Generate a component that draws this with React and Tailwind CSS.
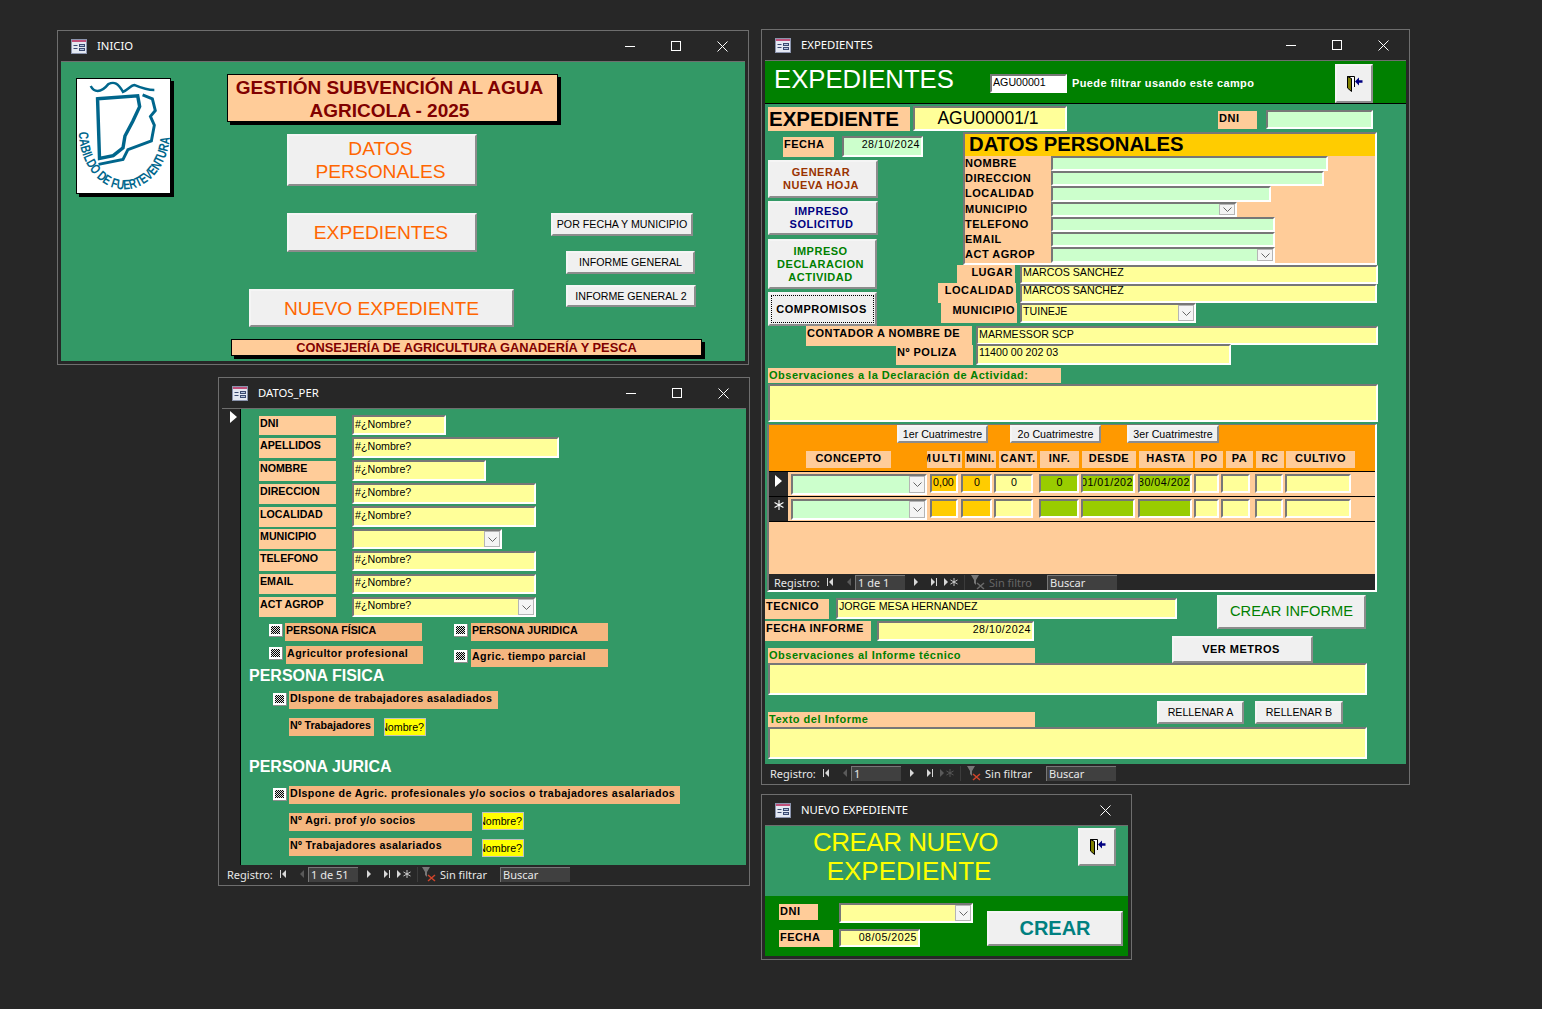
import React from "react";

const sunken = "border-2 border-t-[#777777] border-l-[#777777] border-r-white border-b-white";
const raised = "border-2 border-t-[#f5f5f5] border-l-[#f5f5f5] border-r-[#8c8c8c] border-b-[#8c8c8c] bg-[#f0f0f0]";
const wide = "font-bold text-[11px] tracking-[0.5px]";
const small = "font-bold text-[10.67px]";

const FormIcon = () => (
  <svg width="16" height="15" viewBox="0 0 16 15" className="shrink-0">
    <rect x="0.5" y="0.5" width="15" height="14" fill="#e4e8f2" stroke="#8b94ad" />
    <rect x="1" y="1" width="14" height="2" fill="#c0507a" />
    <path d="M2.5 6.5H6.5M2.5 9.5H6.5" stroke="#3b4a70" />
    <rect x="8.5" y="5.5" width="5" height="2" fill="#b4c3de" stroke="#3b4a70" />
    <rect x="8.5" y="9.5" width="5" height="2" fill="#b4c3de" stroke="#3b4a70" />
  </svg>
);

const DoorIcon = () => (
  <svg width="17" height="16" viewBox="0 0 17 16">
    <path d="M1.5 11V0.5H8.5V11" fill="white" stroke="black" />
    <path d="M1.5 0.5L5.5 2.5V15.5L1.5 12Z" fill="#808000" stroke="black" />
    <path d="M11 5.5H16.5" stroke="#000080" strokeWidth="2.5" />
    <path d="M13 1.5L9 5.5L13 9.5Z" fill="#000080" />
  </svg>
);

const Star = ({ color = "white", size = 9 }) => (
  <svg width={size} height={size} viewBox="0 0 9 9" stroke={color} fill="none" className="shrink-0">
    <path d="M4.5 0V9M0.5 2.2L8.5 6.8M8.5 2.2L0.5 6.8" />
  </svg>
);

const WinControls = ({ onlyClose }) => (
  <div className="ml-auto flex">
    {!onlyClose && (
      <>
        <div className="w-[46px] flex justify-center items-center">
          <div className="w-[10px] h-px bg-white" />
        </div>
        <div className="w-[46px] flex justify-center items-center">
          <div className="w-[10px] h-[10px] border border-white" />
        </div>
      </>
    )}
    <div className="w-[46px] flex justify-center items-center">
      <svg width="11" height="11" viewBox="0 0 11 11" stroke="white">
        <path d="M0.5 0.5L10.5 10.5M10.5 0.5L0.5 10.5" />
      </svg>
    </div>
  </div>
);

const Window = ({ title, className, titleClass = "", onlyClose, children }) => (
  <div className={`absolute flex flex-col border border-[#6e6e6e] bg-[#272727] px-[3px] pb-[3px] ${className}`}>
    <div className="h-[30px] shrink-0 flex items-center pl-[10px]">
      <FormIcon />
      <span className={`ml-[10px] text-[11.3px] text-white [font-family:'Noto_Sans',sans-serif] ${titleClass}`}>{title}</span>
      <WinControls onlyClose={onlyClose} />
    </div>
    <div className="flex-1 min-h-0 flex flex-col border-t border-[#6e6e6e]">{children}</div>
  </div>
);

const Chevron = () => (
  <div className="w-[16px] shrink-0 self-stretch flex items-center justify-center bg-[#f4f4f4] border border-[#b5b5b5]">
    <svg width="9" height="5" viewBox="0 0 9 5" fill="none" stroke="#666666">
      <path d="M0.5 0.5L4.5 4.5L8.5 0.5" />
    </svg>
  </div>
);

const Field = ({ className = "", children }) => (
  <div className={`shrink-0 flex items-start overflow-hidden whitespace-nowrap text-[10.67px] leading-[12px] text-black pl-px ${sunken} ${className}`}>
    {children}
  </div>
);

const Combo = ({ className = "", children }) => (
  <Field className={`pr-0 ${className}`}>
    <span className="flex-1">{children}</span>
    <Chevron />
  </Field>
);

const Btn = ({ className = "", children }) => (
  <button className={`shrink-0 leading-[13px] ${raised} ${className}`}>{children}</button>
);

const Check = ({ className = "" }) => (
  <div className={`shrink-0 w-[14px] h-[13px] p-[2px] bg-white border-r border-b border-[#8c8c8c] ${className}`}>
    <div className="w-full h-full bg-[repeating-conic-gradient(#000_0_25%,#ddd_0_50%)] bg-[length:2px_2px]" />
  </div>
);

const NavTri = ({ dim, left, bar }) => (
  <svg width="7" height="9" viewBox="0 0 7 9" fill={dim ? "#5a5a5a" : "#d8d8d8"} className="shrink-0">
    {left ? <path d="M6 0V8L2 4Z" /> : <path d="M1 0V8L5 4Z" />}
    {bar && <rect x={left ? 0 : 6} y="0" width="1" height="8" />}
  </svg>
);

const NavBar = ({ rec, filter, dimFilter, dimNew, filterGap, buscar, className = "" }) => (
  <div className={`shrink-0 h-[16px] flex items-center bg-[#272727] whitespace-nowrap text-[11px] text-[#e8e8e8] [font-family:'Noto_Sans',sans-serif] ${className}`}>
    <span className="w-[53px] mt-[2px]">Registro:</span>
    <span className="w-[18px] flex"><NavTri left bar /></span>
    <span className="w-[10px] flex"><NavTri left dim /></span>
    <span className="w-[50px] h-[15px] bg-[#404040] border-t border-l border-[#777777] leading-[14px] pl-[2px] text-[11px]">{rec}</span>
    <span className="ml-[8px] w-[17px] flex"><NavTri /></span>
    <span className="w-[13px] flex"><NavTri bar /></span>
    <span className="w-[16px] flex items-center">
      <NavTri dim={dimNew} />
      <Star size={8} color={dimNew ? "#5a5a5a" : "#d8d8d8"} />
    </span>
    <span className="ml-[5px] w-px h-[15px] bg-[#3c3c3c]" />
    <span className={`w-[18px] flex ${filterGap}`}>
      <svg width="15" height="15" viewBox="0 0 15 15">
        <path d="M0 0H8L5 5V10L3 8V5Z" fill="#777777" />
        <path d="M6 8L13 14M13 8L6 14" stroke={dimFilter ? "#6a6a6a" : "#d0442a"} strokeWidth="1.5" />
      </svg>
    </span>
    <span className={`w-[47px] mt-[2px] ${dimFilter ? "text-[#666666]" : ""}`}>{filter}</span>
    <span className={`w-[70px] h-[15px] bg-[#404040] border-t border-l border-[#777777] leading-[14px] pl-[2px] text-[11px] ${buscar}`}>Buscar</span>
  </div>
);

const Logo = () => (
  <div className="shrink-0 w-[95px] h-[116px] ml-[15px] mt-[16px] bg-white border border-black shadow-[3px_3px_0_#000] overflow-hidden">
    <svg width="93" height="114" viewBox="0 0 95 116" fill="none" stroke="#00668c" strokeWidth="3">
      <path d="M14 7C17 13 24 15 32 5C38 2 42 4 47 13C52 11 55 6 59 6C66 9 72 11 79 11" strokeWidth="2.5" />
      <path d="M21 20L62 17L64 28L57 43L49 58L47 70L37 78L23 81Z" strokeWidth="3.5" />
      <path d="M67 16L77 20L80 32L75 38L79 47L76 63L52 72L47 82L22 87" />
      <path id="logo-arc" d="M2 54A46 58 0 0 0 95 54" stroke="none" />
      <text fill="#00668c" stroke="none" fontSize="14" fontWeight="700" className="[font-family:'Liberation_Sans',sans-serif]">
        <textPath href="#logo-arc" textLength="160" lengthAdjust="spacingAndGlyphs">CABILDO DE FUERTEVENTURA</textPath>
      </text>
    </svg>
  </div>
);

const Inicio = () => {
  const orange = "text-[#ff6600] text-[19.2px] leading-[23px]";
  const thin = "text-[10.67px] text-black";
  return (
    <Window title="INICIO" titleClass="mt-px" className="left-[57px] top-[30px] w-[692px] h-[335px]">
      <div className="flex-1 flex bg-[#339966]">
        <Logo />
        <div className="ml-[56px] w-[320px] shrink-0 flex flex-col items-start">
          <div className="shrink-0 mt-[12px] w-[331px] h-[48px] pt-px pr-[6px] bg-[#ffcc99] border border-black shadow-[3px_3px_0_#000] text-center text-[19px] leading-[23px] font-bold text-[#800000]">
            GESTIÓN SUBVENCIÓN AL AGUA
            <br />
            AGRICOLA - 2025
          </div>
          <Btn className={`ml-[60px] mt-[12px] w-[190px] h-[52px] pr-[3px] leading-[23px]! ${orange}`}>
            DATOS
            <br />
            PERSONALES
          </Btn>
          <Btn className={`ml-[60px] mt-[27px] w-[190px] h-[39px] pr-[2px] ${orange}`}>EXPEDIENTES</Btn>
          <Btn className={`ml-[22px] mt-[37px] w-[265px] h-[38px] ${orange}`}>NUEVO EXPEDIENTE</Btn>
          <div className="shrink-0 ml-[4px] mt-[12px] w-[471px] h-[17px] bg-[#ffcc99] border border-black shadow-[3px_3px_0_#000] text-center text-[12.85px] leading-[16px] font-bold text-[#800000]">
            CONSEJERÍA DE AGRICULTURA GANADERÍA Y PESCA
          </div>
        </div>
        <div className="ml-[4px] flex flex-col items-start pt-[151px]">
          <Btn className={`w-[142px] h-[23px] ${thin}`}>POR FECHA Y MUNICIPIO</Btn>
          <Btn className={`ml-[15px] mt-[15px] w-[129px] h-[23px] ${thin}`}>INFORME GENERAL</Btn>
          <Btn className={`ml-[15px] mt-[11px] w-[130px] h-[22px] ${thin}`}>INFORME GENERAL 2</Btn>
        </div>
      </div>
    </Window>
  );
};

const perRows = [
  { name: "DNI", row: "h-[20px]", field: "w-[94px]" },
  { name: "APELLIDOS", row: "h-[21px] mt-[2px]", field: "w-[207px]" },
  { name: "NOMBRE", row: "h-[21px] mt-[2px]", field: "w-[134px]" },
  { name: "DIRECCION", row: "h-[21px] mt-[2px]", field: "w-[184px]" },
  { name: "LOCALIDAD", row: "h-[21px] mt-[2px]", field: "w-[184px]" },
  { name: "MUNICIPIO", row: "h-[20px] mt-[2px]", field: "w-[150px]", combo: true, empty: true, tight: true },
  { name: "TELEFONO", row: "h-[20px] mt-[2px]", field: "w-[184px]", tight: true },
  { name: "EMAIL", row: "h-[20px] mt-[3px]", field: "w-[184px]", tight: true },
  { name: "ACT AGROP", row: "h-[20px] mt-[3px]", field: "w-[184px]", combo: true, tight: true },
];

const tan = `bg-[#f5b67f] text-black ${small} leading-[14px] pl-px shrink-0`;
const Yellow = ({ className = "" }) => (
  <div className={`shrink-0 ml-[10px] w-[42px] h-[18px] pr-px flex justify-end items-center overflow-hidden whitespace-nowrap bg-[#ffff00] border border-[#c0c0c0] text-[10.67px] text-black ${className}`}>
    #¿Nombre?
  </div>
);

const DatosPer = () => (
  <Window title="DATOS_PER" className="left-[218px] top-[377px] w-[532px] h-[509px]">
    <div className="flex-1 min-h-0 flex">
      <div className="w-[19px] shrink-0 border-r border-black pt-[2px] pl-[8px]">
        <svg width="7" height="12" viewBox="0 0 7 12" fill="white">
          <path d="M0 0L7 6L0 12Z" />
        </svg>
      </div>
      <div className="flex-1 bg-[#339966] pt-[6px] flex flex-col items-start">
        {perRows.map((r) => (
          <div key={r.name} className={`flex shrink-0 ${r.row}`}>
            <div className={`ml-[18px] w-[77px] bg-[#ffcc99] text-black leading-[14px] pl-px ${r.tight ? "" : "mt-px"} ${small}`}>{r.name}</div>
            {r.combo ? (
              <Combo className={`ml-[16px] h-full bg-[#ffff99] ${r.field}`}>{r.empty ? "" : "#¿Nombre?"}</Combo>
            ) : (
              <Field className={`ml-[16px] h-full bg-[#ffff99] ${r.tight ? "" : "pt-px"} ${r.field}`}>#¿Nombre?</Field>
            )}
          </div>
        ))}
        <div className="flex mt-[6px] ml-[28px]">
          <Check className="mt-px" />
          <div className={`ml-[2px] w-[137px] h-[18px] ${tan}`}>PERSONA FÍSICA</div>
          <Check className="ml-[32px] mt-px" />
          <div className={`ml-[3px] w-[137px] h-[18px] ${tan}`}>PERSONA JURIDICA</div>
        </div>
        <div className="flex mt-[5px] ml-[28px] h-[21px]">
          <Check className="mt-px" />
          <div className={`ml-[3px] w-[137px] h-[18px] tracking-[0.45px] ${tan}`}>Agricultor profesional</div>
          <Check className="ml-[31px] mt-[4px]" />
          <div className={`ml-[3px] mt-[3px] w-[137px] h-[18px] tracking-[0.4px] ${tan}`}>Agric. tiempo parcial</div>
        </div>
        <div className="ml-[8px] text-[16px] leading-[18px] font-bold text-white">PERSONA FISICA</div>
        <div className="flex mt-[6px] ml-[32px]">
          <Check className="mt-[2px]" />
          <div className={`ml-[2px] w-[209px] h-[18px] tracking-[0.4px] ${tan}`}>DIspone de trabajadores asaladiados</div>
        </div>
        <div className="flex mt-[9px] ml-[48px]">
          <div className={`w-[85px] h-[18px] ${tan}`}>Nº Trabajadores</div>
          <Yellow />
        </div>
        <div className="mt-[22px] ml-[8px] text-[16px] leading-[18px] font-bold text-white">PERSONA JURICA</div>
        <div className="flex mt-[10px] ml-[32px]">
          <Check className="mt-[2px]" />
          <div className={`ml-[2px] w-[391px] h-[18px] tracking-[0.43px] ${tan}`}>DIspone de Agric. profesionales y/o socios o trabajadores asalariados</div>
        </div>
        <div className="flex mt-[8px] ml-[48px] h-[19px]">
          <div className={`mt-px w-[183px] h-[18px] tracking-[0.35px] ${tan}`}>Nº Agri. prof y/o socios</div>
          <Yellow />
        </div>
        <div className="flex mt-[7px] ml-[48px] h-[19px]">
          <div className={`w-[183px] h-[18px] tracking-[0.35px] ${tan}`}>Nº Trabajadores asalariados</div>
          <Yellow className="mt-px" />
        </div>
      </div>
    </div>
    <NavBar rec="1 de 51" filter="Sin filtrar" className="mt-px pl-[5px]" filterGap="ml-[4px]" buscar="ml-[13px]" />
  </Window>
);

const peopleRows = [
  { name: "NOMBRE", h: "h-[15px]", w: "w-[277px]" },
  { name: "DIRECCION", h: "h-[15px]", w: "w-[273px]" },
  { name: "LOCALIDAD", h: "h-[16px]", w: "w-[220px]" },
  { name: "MUNICIPIO", h: "h-[15px]", w: "w-[186px]", combo: true },
  { name: "TELEFONO", h: "h-[15px]", w: "w-[224px]" },
  { name: "EMAIL", h: "h-[15px]", w: "w-[224px]" },
  { name: "ACT AGROP", h: "h-[16px]", w: "w-[224px]", combo: true },
];

const headers = [
  { t: "CONCEPTO", c: "ml-[37px] w-[85px] justify-center" },
  { t: "MULTI", c: "ml-[36px] w-[35px] justify-end tracking-[1.5px]!" },
  { t: "MINI.", c: "ml-[3px] w-[31px] justify-center" },
  { t: "CANT.", c: "ml-[3px] w-[38px] justify-center" },
  { t: "INF.", c: "ml-[3px] w-[39px] justify-center" },
  { t: "DESDE", c: "ml-[3px] w-[54px] justify-center" },
  { t: "HASTA", c: "ml-[3px] w-[54px] justify-center" },
  { t: "PO", c: "ml-[2px] w-[28px] justify-center" },
  { t: "PA", c: "ml-[3px] w-[27px] justify-center" },
  { t: "RC", c: "ml-[3px] w-[28px] justify-center" },
  { t: "CULTIVO", c: "ml-[2px] w-[69px] justify-center" },
];

const cells = [
  { v: "0,00", c: "ml-[3px] w-[28px] bg-[#ffcc00]" },
  { v: "0", c: "ml-[3px] w-[31px] bg-[#ffcc00] justify-center" },
  { v: "0", c: "ml-[2px] w-[39px] bg-[#ffff99] justify-center" },
  { v: "0", c: "ml-[6px] w-[40px] bg-[#99cc00] justify-center" },
  { v: "01/01/2024", c: "ml-[2px] w-[54px] bg-[#99cc00] tracking-[0.5px] -indent-[3px]" },
  { v: "30/04/2024", c: "ml-[3px] w-[54px] bg-[#99cc00] tracking-[0.5px] -indent-[3px]" },
  { v: "", c: "ml-[2px] w-[25px] bg-[#ffff99]" },
  { v: "", c: "ml-[2px] w-[29px] bg-[#ffff99]" },
  { v: "", c: "ml-[5px] w-[28px] bg-[#ffff99]" },
  { v: "", c: "ml-[2px] w-[66px] bg-[#ffff99]" },
];

const GridRow = ({ mark, filled }) => (
  <div className="h-[25px] shrink-0 flex border-b border-black bg-[#ffcc99]">
    <div className="w-[19px] shrink-0 bg-[#272727] flex justify-center items-start pt-[3px]">{mark}</div>
    <Combo className="ml-[3px] mt-[2px] w-[136px] h-[21px] bg-[#ccffcc]" />
    {cells.map((cell, i) => (
      <Field key={i} className={`mt-[2px] h-[19px] ${cell.c}`}>
        {filled ? cell.v : ""}
      </Field>
    ))}
  </div>
);

const Expedientes = () => {
  const lab = `shrink-0 bg-[#ffcc99] text-black leading-[14px] pl-px ${wide}`;
  const greenLab = `shrink-0 bg-[#ffcc99] text-[#008000] leading-[14px] pl-px ${wide}`;
  return (
    <Window title="EXPEDIENTES" titleClass="mt-px" className="left-[761px] top-[29px] w-[649px] h-[756px]">
      <div className="h-[703px] shrink-0 bg-[#339966] flex flex-col items-start">
        <div className="w-full h-[43px] shrink-0 flex items-start bg-[#008000] border-b border-black">
          <div className="ml-[9px] mt-[3px] w-[216px] text-[25.7px] leading-[30px] text-white">EXPEDIENTES</div>
          <Field className="mt-[13px] w-[77px] h-[19px] bg-white">AGU00001</Field>
          <div className="ml-[5px] mt-[15px] leading-[14px] text-white tracking-[0.4px] text-[11px] font-bold">Puede filtrar usando este campo</div>
          <Btn className="ml-auto mr-[33px] mt-[3px] w-[38px] h-[39px] flex items-center justify-center"><DoorIcon /></Btn>
        </div>

        <div className="h-[28px] shrink-0 flex items-start">
          <div className="ml-[3px] mt-[3px] w-[142px] h-[24px] bg-[#ffcc99] text-[20.5px] leading-[24px] font-bold text-black pl-px shrink-0">EXPEDIENTE</div>
          <Field className="ml-[3px] mt-[2px] w-[154px] h-[25px] bg-[#ffff99] justify-center items-center! leading-[21px]! pr-[5px] text-[17.5px]!">AGU00001/1</Field>
          <div className={`ml-[151px] mt-[7px] w-[39px] h-[18px] ${lab}`}>DNI</div>
          <Field className="ml-[9px] mt-[6px] w-[107px] h-[19px] bg-[#ccffcc]" />
        </div>

        <div className="flex shrink-0">
          <div className="w-[173px] shrink-0 flex flex-col items-start">
            <div className="flex">
              <div className={`ml-[18px] mt-[5px] w-[51px] h-[20px] ${lab}`}>FECHA</div>
              <Field className="ml-[8px] mt-[4px] w-[81px] h-[21px] bg-[#ccffcc] justify-end pr-px tracking-[0.5px]">28/10/2024</Field>
            </div>
            <Btn className={`ml-[3px] mt-[3px] w-[110px] h-[38px] pr-[4px] text-[#993300] ${wide}`}>
              GENERAR
              <br />
              NUEVA HOJA
            </Btn>
            <Btn className={`ml-[3px] mt-[3px] w-[110px] h-[34px] pr-[3px] text-[#000080] ${wide}`}>
              IMPRESO
              <br />
              SOLICITUD
            </Btn>
            <Btn className={`ml-[3px] mt-[4px] w-[109px] h-[50px] pr-[4px] text-[#008000] ${wide}`}>
              IMPRESO
              <br />
              DECLARACION
              <br />
              ACTIVIDAD
            </Btn>
            <Btn className={`ml-[3px] mt-[3px] w-[109px] h-[34px] pr-[2px] text-black outline-1 outline-dotted outline-black -outline-offset-4 ${wide}`}>
              COMPROMISOS
            </Btn>
          </div>

          <div className="flex flex-col items-start">
            <div className={`ml-[25px] w-[414px] h-[133px] flex flex-col bg-[#ffcc99] ${sunken}`}>
              <div className="h-[22px] shrink-0 bg-[#ffcc00] pl-[4px] text-[20.3px] leading-[21px] font-bold text-black">DATOS PERSONALES</div>
              {peopleRows.map((r) => (
                <div key={r.name} className={`flex shrink-0 ${r.h}`}>
                  <div className={`w-[86px] shrink-0 leading-[15px] text-black ${wide}`}>{r.name}</div>
                  {r.combo ? (
                    <Combo className={`h-full bg-[#ccffcc] ${r.w}`} />
                  ) : (
                    <Field className={`h-full bg-[#ccffcc] ${r.w}`} />
                  )}
                </div>
              ))}
            </div>
            <div className="flex h-[18px]">
              <div className={`ml-[19px] w-[58px] h-[19px] text-right pr-[2px] ${lab}`}>LUGAR</div>
              <Field className="ml-[5px] w-[358px] h-[19px] bg-[#ffff99] leading-[10px]!">MARCOS SANCHEZ</Field>
            </div>
            <div className="flex h-[20px]">
              <div className={`w-[78px] h-[20px] text-right pr-[2px] ${lab}`}>LOCALIDAD</div>
              <Field className="ml-[4px] mt-px w-[357px] h-[19px] bg-[#ffff99] leading-[9px]!">MARCOS SANCHEZ</Field>
            </div>
            <div className="flex h-[20px]">
              <div className={`ml-[3px] w-[76px] h-[20px] text-right pr-[2px] ${lab}`}>MUNICIPIO</div>
              <Combo className="ml-[3px] w-[176px] h-[20px] bg-[#ffff99]">TUINEJE</Combo>
            </div>
          </div>
        </div>

        <div className="flex h-[19px]">
          <div className={`ml-[41px] w-[166px] h-[20px] ${lab}`}>CONTADOR A NOMBRE DE</div>
          <Field className="ml-[4px] w-[402px] h-[19px] bg-[#ffff99]">MARMESSOR SCP</Field>
        </div>
        <div className="flex h-[20px]">
          <div className={`ml-[131px] w-[77px] h-[20px] ${lab}`}>Nº POLIZA</div>
          <Field className="ml-[3px] -mt-px w-[255px] h-[21px] bg-[#ffff99]">11400 00 202 03</Field>
        </div>
        <div className={`ml-[3px] mt-[3px] w-[293px] h-[15px] ${greenLab}`}>Observaciones a la Declaración de Actividad:</div>
        <Field className="ml-[3px] mt-px w-[610px] h-[38px] bg-[#ffff99]" />

        <div className="ml-[2px] mt-[2px] w-[610px] h-[168px] shrink-0 flex flex-col border-t border-l-2 border-r-2 border-b-2 border-t-[#777777] border-l-[#777777] border-r-white border-b-white bg-[#ffcc99]">
          <div className="h-[47px] shrink-0 bg-[#ff9900] border-b border-black flex flex-col items-start">
            <div className="flex h-[18px]">
              <Btn className="ml-[128px] w-[91px] h-[18px] text-[10.67px] text-black">1er Cuatrimestre</Btn>
              <Btn className="ml-[22px] w-[91px] h-[18px] text-[10.67px] text-black">2o Cuatrimestre</Btn>
              <Btn className="ml-[26px] w-[92px] h-[18px] text-[10.67px] text-black">3er Cuatrimestre</Btn>
            </div>
            <div className="flex mt-[8px] h-[17px]">
              {headers.map((h) => (
                <div key={h.t} className={`shrink-0 h-[17px] flex overflow-hidden whitespace-nowrap bg-[#ffcc99] text-black leading-[15px] ${wide} ${h.c}`}>
                  {h.t}
                </div>
              ))}
            </div>
          </div>
          <GridRow mark={<svg width="7" height="12" viewBox="0 0 7 12" fill="white"><path d="M0 0L7 6L0 12Z" /></svg>} filled />
          <GridRow mark={<Star size={10} />} />
          <div className="flex-1" />
          <NavBar rec="1 de 1" filter="Sin filtro" dimFilter className="pl-[5px]" filterGap="ml-[6px]" buscar="ml-[11px]" />
        </div>

        <div className="flex mt-[3px] h-[22px]">
          <div className="w-[452px] shrink-0 flex flex-col items-start">
            <div className="flex mt-[4px]">
              <div className={`w-[64px] h-[20px] ${lab}`}>TECNICO</div>
              <Field className="ml-[7px] -mt-px w-[341px] h-[21px] bg-[#ffff99]">JORGE MESA HERNANDEZ</Field>
            </div>
            <div className="flex mt-[2px]">
              <div className={`w-[106px] h-[20px] ${lab}`}>FECHA INFORME</div>
              <Field className="ml-[6px] w-[157px] h-[20px] bg-[#ffff99] justify-end pr-px tracking-[0.5px]">28/10/2024</Field>
            </div>
          </div>
          <Btn className="w-[149px] h-[34px] pb-[2px] text-[14.67px] text-[#008000]">CREAR INFORME</Btn>
        </div>
        <div className="flex mt-[19px] h-[27px] items-start">
          <div className={`ml-[3px] mt-[12px] w-[267px] h-[15px] ${greenLab}`}>Observaciones al Informe técnico</div>
          <Btn className={`ml-[137px] w-[141px] h-[27px] pr-[3px] text-black ${wide}`}>VER METROS</Btn>
        </div>
        <Field className="ml-[3px] w-[599px] h-[32px] bg-[#ffff99]" />
        <div className="flex mt-[6px] h-[26px] items-start">
          <div className={`ml-[3px] mt-[11px] w-[267px] h-[15px] ${greenLab}`}>Texto del Informe</div>
          <Btn className="ml-[122px] w-[87px] h-[23px] text-[10.67px] text-black">RELLENAR A</Btn>
          <Btn className="ml-[11px] w-[88px] h-[23px] text-[10.67px] text-black">RELLENAR B</Btn>
        </div>
        <Field className="ml-[3px] w-[599px] h-[32px] bg-[#ffff99]" />
      </div>
      <NavBar rec="1" filter="Sin filtrar" dimNew className="mt-px pl-[5px]" filterGap="ml-[6px]" buscar="ml-[14px]" />
    </Window>
  );
};

const Nuevo = () => {
  const lab = `shrink-0 bg-[#ffcc99] text-black leading-[14px] pl-px ${wide}`;
  return (
    <Window title="NUEVO EXPEDIENTE" onlyClose className="left-[761px] top-[794px] w-[371px] h-[166px]">
      <div className="h-[70px] shrink-0 flex items-start bg-[#339966]">
        <div className="w-[284px] mt-[2px] text-center text-[26px] leading-[29px] text-[#ffff00]">
          <div className="pr-[3px] tracking-[-0.5px]">CREAR NUEVO</div>
          <div className="pl-[4px]">EXPEDIENTE</div>
        </div>
        <Btn className="ml-auto mr-[12px] mt-[2px] w-[38px] h-[38px] flex items-center justify-center"><DoorIcon /></Btn>
      </div>
      <div className="flex-1 flex bg-[#008000]">
        <div className="w-[208px] shrink-0 flex flex-col">
          <div className="flex mt-[7px]">
            <div className={`ml-[14px] mt-px w-[39px] h-[16px] ${lab}`}>DNI</div>
            <Combo className="ml-[21px] w-[134px] h-[20px] bg-[#ffff99]" />
          </div>
          <div className="flex mt-[6px]">
            <div className={`ml-[14px] mt-px w-[54px] h-[17px] ${lab}`}>FECHA</div>
            <Field className="ml-[6px] w-[81px] h-[18px] bg-[#ffff99] justify-end pr-px tracking-[0.5px]">08/05/2025</Field>
          </div>
        </div>
        <Btn className="ml-[14px] mt-[15px] w-[136px] h-[35px] text-[20px] font-bold text-[#008080]">CREAR</Btn>
      </div>
    </Window>
  );
};

export default function App() {
  return (
    <div className="relative w-[1542px] h-[1009px] overflow-hidden bg-[#272727] [font-family:'Liberation_Sans',sans-serif]">
      <Inicio />
      <DatosPer />
      <Expedientes />
      <Nuevo />
    </div>
  );
}
